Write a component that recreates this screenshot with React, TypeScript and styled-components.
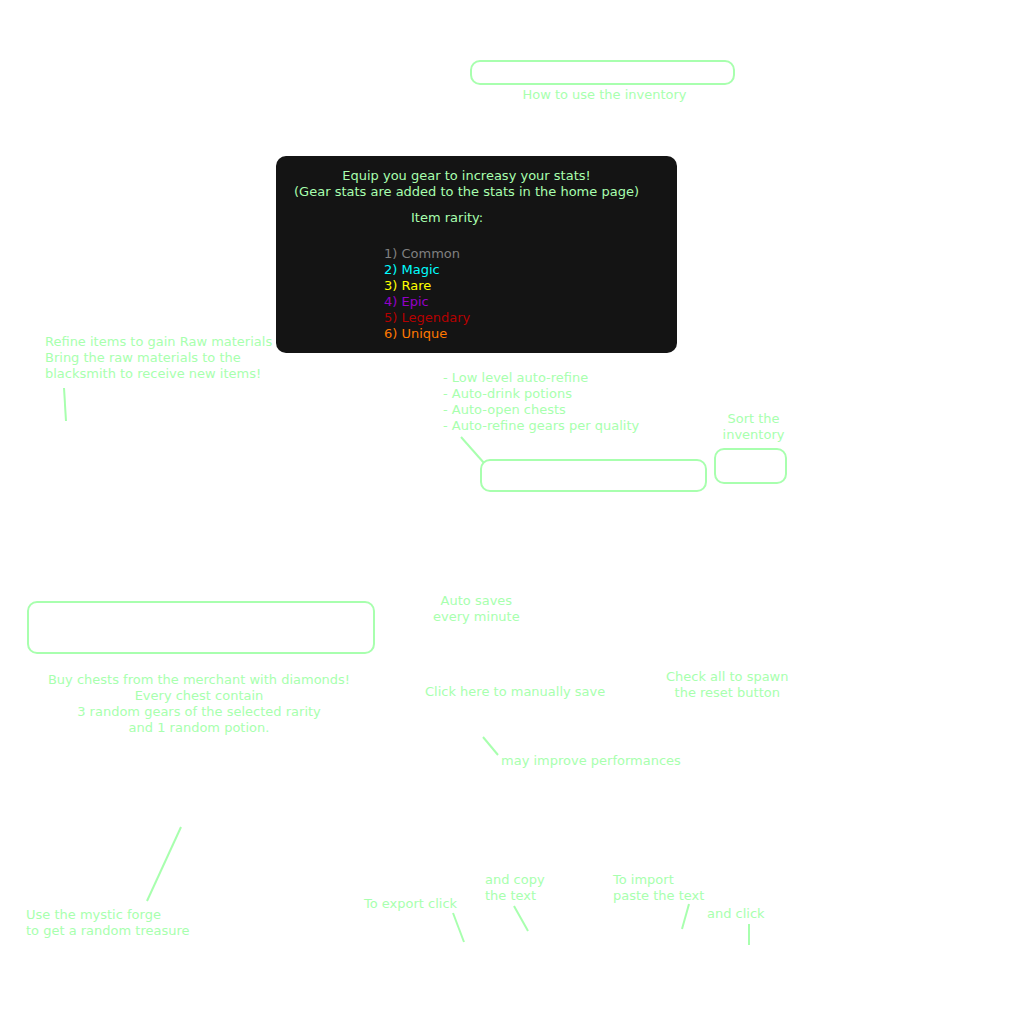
import React from "react";
import styled, { createGlobalStyle } from "styled-components";

const mint = "#a8ffae";

const GlobalStyle = createGlobalStyle`
  *, *::before, *::after { box-sizing: border-box; }
  body {
    margin: 0;
    background: #ffffff;
    color: ${mint};
    font: 13px/16px Verdana, "DejaVu Sans", sans-serif;
  }
`;

const Page = styled.main`
  min-height: 100vh;
  padding-top: 60px;
  white-space: nowrap;
`;

const GearBand = styled.section`
  display: grid;
  grid-template-columns: 276px minmax(0, 1fr);
`;

const ServiceBand = styled.section`
  display: grid;
  grid-template-columns: 425px 240px minmax(0, 1fr);
  margin-top: 100px;
`;

const TransferBand = styled.section`
  display: grid;
  grid-template-columns: 338px 121px 128px 94px minmax(0, 1fr);
  margin-top: 58px;
  padding-left: 26px;
`;

const Column = styled.div<{ $top?: number; $left?: number; $raised?: boolean }>`
  padding-top: ${(p) => p.$top ?? 0}px;
  padding-left: ${(p) => p.$left ?? 0}px;
  z-index: ${(p) => (p.$raised ? 1 : "auto")};
`;

const Note = styled.p<{ $top?: number; $left?: number; $center?: boolean }>`
  width: ${(p) => (p.$center ? "fit-content" : "auto")};
  margin: ${(p) => p.$top ?? 0}px 0 0 ${(p) => p.$left ?? 0}px;
  text-align: ${(p) => (p.$center ? "center" : "left")};
`;

const Frame = styled.div<{ $height: number }>`
  height: ${(p) => p.$height}px;
  border: 2px solid ${mint};
  border-radius: 10px;
`;

const Title = styled.header`
  width: 265px;
  margin-left: 194px;
  text-align: center;
`;

const TitleText = styled.h1`
  margin: 2px 0 0;
  padding-left: 4px;
  font: inherit;
`;

const RarityPanel = styled.article`
  width: 401px;
  margin-top: 53px;
  padding: 12px 12px 11px;
  border-radius: 10px;
  background: #141414;
`;

const RarityIntro = styled.p`
  margin: 0;
  padding-right: 20px;
  text-align: center;
`;

const RarityTitle = styled.h2`
  margin: 10px 0 20px 123px;
  font: inherit;
`;

const PlainList = styled.ul`
  margin: 0;
  padding: 0;
  list-style: none;
`;

const RarityList = styled(PlainList)`
  padding-left: 96px;
`;

const Rarity = styled.li<{ $color: string }>`
  color: ${(p) => p.$color};
`;

const Tools = styled.div`
  display: flex;
  align-items: flex-start;
  gap: 7px;
  margin: 17px 0 0 167px;
`;

const AutoTools = styled.div`
  width: 264px;
`;

const AutoFrame = styled(Frame)`
  margin: -4px 0 0 37px;
`;

const SortTool = styled.div`
  width: 73px;
  padding-top: 41px;
`;

const SortNote = styled.p`
  margin: 0 0 5px;
  padding-left: 6px;
  text-align: center;
`;

const Merchant = styled.div`
  width: 375px;
  padding: 9px 0 0 27px;
`;

const MerchantNote = styled.p`
  margin: 18px 0 0;
  padding-right: 4px;
  text-align: center;
`;

const LeaderSvg = styled.svg<{ $top: number; $left: number }>`
  display: block;
  margin: ${(p) => p.$top}px 0 0 ${(p) => p.$left}px;
  overflow: visible;
`;

type LeaderProps = {
  w: number;
  h: number;
  top?: number;
  left: number;
  rising?: boolean;
};

function Leader({ w, h, top = 0, left, rising }: LeaderProps) {
  return (
    <LeaderSvg $top={top} $left={left} width={Math.max(w, 1)} height={h} aria-hidden="true">
      <line x1={rising ? w : 0} y1={0} x2={rising ? 0 : w} y2={h} stroke={mint} strokeWidth={2} />
    </LeaderSvg>
  );
}

const rarities = [
  { name: "Common", color: "#808080" },
  { name: "Magic", color: "#00ffff" },
  { name: "Rare", color: "#ffff00" },
  { name: "Epic", color: "#9400c8" },
  { name: "Legendary", color: "#b40000" },
  { name: "Unique", color: "#ff7800" },
];

const automations = [
  "Low level auto-refine",
  "Auto-drink potions",
  "Auto-open chests",
  "Auto-refine gears per quality",
];

export default function App() {
  return (
    <Page>
      <GlobalStyle />
      <GearBand>
        <Column $top={274} $left={45} $raised>
          <Note>
            Refine items to gain Raw materials
            <br />
            Bring the raw materials to the
            <br />
            blacksmith to receive new items!
          </Note>
          <Leader w={2} h={33} top={6} left={19} />
        </Column>
        <Column>
          <Title>
            <Frame $height={25} />
            <TitleText>How to use the inventory</TitleText>
          </Title>
          <RarityPanel>
            <RarityIntro>
              Equip you gear to increasy your stats!
              <br />
              (Gear stats are added to the stats in the home page)
            </RarityIntro>
            <RarityTitle>Item rarity:</RarityTitle>
            <RarityList as="ol">
              {rarities.map((r, i) => (
                <Rarity key={r.name} $color={r.color}>
                  {`${i + 1}) ${r.name}`}
                </Rarity>
              ))}
            </RarityList>
          </RarityPanel>
          <Tools>
            <AutoTools>
              <PlainList>
                {automations.map((a) => (
                  <li key={a}>{`- ${a}`}</li>
                ))}
              </PlainList>
              <Leader w={23} h={26} top={3} left={18} />
              <AutoFrame $height={33} />
            </AutoTools>
            <SortTool>
              <SortNote>
                Sort the
                <br />
                inventory
              </SortNote>
              <Frame $height={36} />
            </SortTool>
          </Tools>
        </Column>
      </GearBand>

      <ServiceBand>
        <Merchant>
          <Frame $height={53} />
          <MerchantNote>
            Buy chests from the merchant with diamonds!
            <br />
            Every chest contain
            <br />
            3 random gears of the selected rarity
            <br />
            and 1 random potion.
          </MerchantNote>
        </Merchant>
        <Column $top={1}>
          <Note $left={8} $center>
            Auto saves
            <br />
            every minute
          </Note>
          <Note $top={59}>Click here to manually save</Note>
          <Leader w={15} h={18} top={37} left={58} />
          <Note $top={-2} $left={76}>
            may improve performances
          </Note>
        </Column>
        <Column $top={77} $left={1}>
          <Note $center>
            Check all to spawn
            <br />
            the reset button
          </Note>
        </Column>
      </ServiceBand>

      <TransferBand>
        <Column>
          <Leader w={34} h={74} left={121} rising />
          <Note $top={6}>
            Use the mystic forge
            <br />
            to get a random treasure
          </Note>
        </Column>
        <Column $top={69}>
          <Note>To export click</Note>
          <Leader w={11} h={29} top={1} left={89} />
        </Column>
        <Column $top={45}>
          <Note>
            and copy
            <br />
            the text
          </Note>
          <Leader w={14} h={25} top={2} left={29} />
        </Column>
        <Column $top={45}>
          <Note>
            To import
            <br />
            paste the text
          </Note>
          <Leader w={7} h={25} left={69} rising />
        </Column>
        <Column $top={79}>
          <Note>and click</Note>
          <Leader w={0} h={21} top={2} left={42} />
        </Column>
      </TransferBand>
    </Page>
  );
}
